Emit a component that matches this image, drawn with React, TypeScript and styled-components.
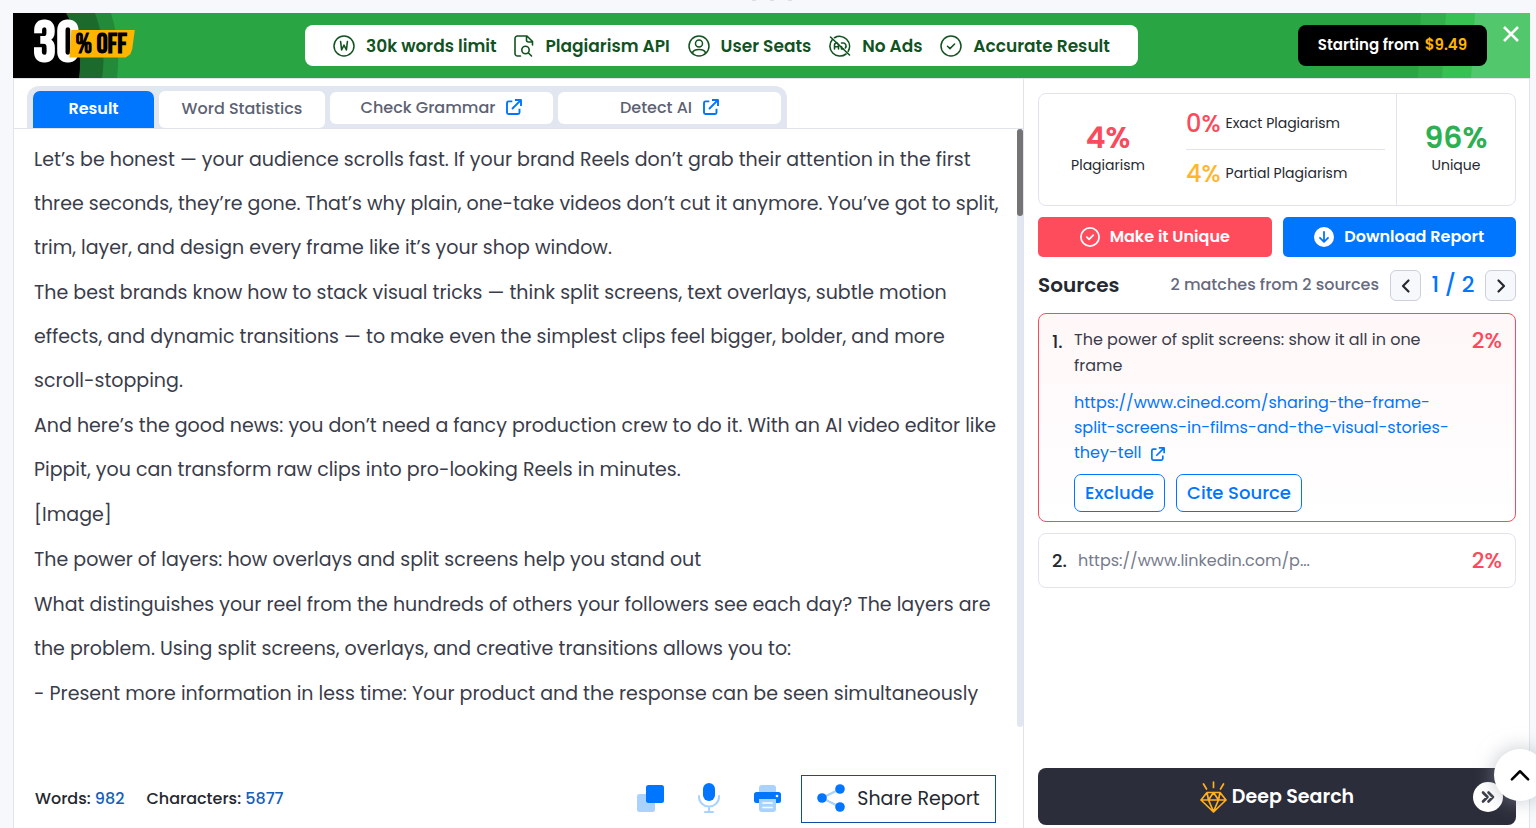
import React from 'react';
import styled, { createGlobalStyle, css } from 'styled-components';

const Global = createGlobalStyle`
  *, *::before, *::after { box-sizing: border-box; }
  body {
    margin: 0;
    background: #f6f8fb;
    color: #25282f;
    font-family: Poppins, Inter, "Liberation Sans", sans-serif;
    overflow: hidden;
  }
  button { font: inherit; cursor: pointer; border: 0; padding: 0; }
  a { text-decoration: none; }
  p, h2 { margin: 0; }
  svg { display: block; flex: none; }
`;

const Page = styled.div`
  height: 100vh;
  min-height: 640px;
  padding: 0 6px 0 13px;
  display: flex;
  flex-direction: column;
`;

/* lower edge of the dots that close the section above */
const SectionDots = styled.div`
  flex: none;
  height: 13px;
  display: flex;
  justify-content: center;
  gap: 14px;
  i { width: 4px; height: 1px; background: #dcdee2; }
`;

/* ---------- promo banner ---------- */
const Banner = styled.header`
  position: relative;
  flex: none;
  height: 65px;
  padding-right: 43px;
  display: flex;
  align-items: center;
  justify-content: space-between;
  background: #2aa544;
  overflow: hidden;
`;

const BannerArt = styled.svg<{ $side: 'left' | 'right' }>`
  position: absolute;
  top: 0;
  ${({ $side }) => ($side === 'left' ? 'left: 0;' : 'right: 0;')}
`;

const Offer = styled.div`
  position: relative;
  flex: none;
  width: 132px;
  padding: 0 0 4px 20px;
  display: flex;
  align-items: center;
  font-family: "Bebas Neue", Oswald, "Liberation Sans Narrow", "Roboto Condensed", sans-serif;
  font-weight: 700;
`;

const OfferNumber = styled.span`
  color: #fff;
  font-size: 58px;
  line-height: 60px;
  margin-right: -10px;
  white-space: nowrap;
`;

const OfferTag = styled.span`
  position: relative;
  height: 28px;
  padding: 1px 8px 0 6px;
  background: #ffb400;
  color: #000;
  font-size: 28px;
  line-height: 28px;
  white-space: nowrap;
  clip-path: polygon(3% 0, 100% 0, 96% 70%, 93% 88%, 86% 100%, 0 100%);
`;

const Perks = styled.ul`
  position: relative;
  flex: 0 1 833px;
  height: 41px;
  margin: 0;
  padding: 0 28px;
  display: flex;
  align-items: center;
  justify-content: space-between;
  list-style: none;
  background: #fff;
  border-radius: 8px;
  color: #11521f;
`;

const Perk = styled.li`
  display: flex;
  align-items: center;
  gap: 11px;
  font-size: 17px;
  font-weight: 600;
  white-space: nowrap;
`;

const PriceButton = styled.button`
  position: relative;
  flex: none;
  width: 189px;
  height: 41px;
  padding-bottom: 2px;
  border-radius: 8px;
  background: #000;
  color: #fff;
  font-size: 15px;
  font-weight: 600;
  span { color: #ffb400; margin-left: 2px; }
`;

const CloseButton = styled.button`
  position: absolute;
  top: 12px;
  right: 10px;
  background: none;
  color: #fff;
`;

/* ---------- workspace ---------- */
const Workspace = styled.main`
  flex: 1;
  min-height: 0;
  display: grid;
  grid-template-columns: 2fr 1fr;
  background: #fff;
  border: 1px solid #e1e4ec;
  border-bottom: 0;
`;

const ReportPane = styled.section`
  min-width: 0;
  min-height: 0;
  display: flex;
  flex-direction: column;
  border-right: 1px solid #e1e4ec;
`;

const TabStrip = styled.div`
  flex: none;
  padding: 7px 0 0 13px;
  border-bottom: 1px solid #e1e4ec;
  display: flex;
`;

const Tabs = styled.nav`
  height: 42px;
  padding: 5px 6px 0;
  display: flex;
  gap: 5px;
  background: #e2e6f0;
  border-radius: 12px 12px 0 0;
`;

const tabBase = css`
  display: flex;
  align-items: center;
  justify-content: center;
  padding-bottom: 2px;
  font-size: 16px;
  white-space: nowrap;
`;

const Tab = styled.button<{ $active?: boolean }>`
  ${tabBase}
  height: 37px;
  width: ${({ $active }) => ($active ? '121px' : '166px')};
  background: ${({ $active }) => ($active ? '#0076ff' : '#fff')};
  color: ${({ $active }) => ($active ? '#fff' : '#5d6272')};
  font-weight: ${({ $active }) => ($active ? 600 : 500)};
  border-radius: ${({ $active }) => ($active ? '7px 7px 0 0' : '6px')};
`;

const TabLink = styled.a`
  ${tabBase}
  width: 223px;
  height: 32px;
  margin-top: 1px;
  gap: 11px;
  background: #fff;
  color: #5d6272;
  font-weight: 500;
  border-radius: 6px;
  svg { color: #0076ff; }
`;

const Reader = styled.div`
  flex: 1;
  min-height: 0;
  display: flex;
`;

const Article = styled.article`
  flex: 1;
  min-width: 0;
  overflow: hidden;
  padding: 9px 16px 0 20px;
  color: #3a3c4a;
  font-size: 19px;
  line-height: 44px;
`;

const Paragraph = styled.p`
  margin-bottom: 1px;
  white-space: nowrap;
`;

const ScrollTrack = styled.div`
  width: 6px;
  background: #e2e6f0;
  border-radius: 3px;
`;

const ScrollThumb = styled.div`
  height: 87px;
  background: #747474;
  border-radius: 3px;
`;

const ReportFooter = styled.footer`
  flex: none;
  height: 101px;
  padding: 48px 27px 5px 21px;
  display: flex;
  align-items: center;
  justify-content: space-between;
`;

const Counts = styled.div`
  display: flex;
  align-items: center;
  gap: 22px;
  padding-bottom: 2px;
  font-size: 16px;
  font-weight: 500;
  b { font-weight: 500; color: #1660b8; }
`;

const Actions = styled.div`
  display: flex;
  align-items: center;
  gap: 20px;
`;

const IconGroup = styled.div`
  display: flex;
  align-items: center;
  padding-bottom: 2px;
  gap: 34px;
`;

const IconButton = styled.button`
  background: none;
`;

const ShareButton = styled.button`
  width: 195px;
  height: 48px;
  display: flex;
  align-items: center;
  justify-content: center;
  gap: 12px;
  padding-bottom: 2px;
  background: #fff;
  border: 1px solid #0d4ea3;
  color: #25282f;
  font-size: 19px;
`;

/* ---------- side panel ---------- */
const SidePane = styled.aside`
  min-width: 0;
  min-height: 0;
  padding: 14px 13px 3px 14px;
  display: flex;
  flex-direction: column;
`;

const Scores = styled.div`
  flex: none;
  height: 113px;
  display: grid;
  grid-template-columns: 138px 1fr 119px;
  border: 1px solid #e1e4ec;
  border-radius: 8px;
`;

const Score = styled.div<{ $tone: string; $divided?: boolean }>`
  display: flex;
  flex-direction: column;
  align-items: center;
  justify-content: center;
  padding-bottom: 3px;
  border-left: ${({ $divided }) => ($divided ? '1px solid #e1e4ec' : '0')};
  font-size: 14px;
  line-height: 20px;
  strong {
    color: ${({ $tone }) => $tone};
    font-size: 30px;
    font-weight: 600;
    line-height: 34px;
  }
`;

const Breakdown = styled.div`
  padding: 3px 11px 0 9px;
`;

const BreakdownRow = styled.div<{ $tone: string }>`
  height: 52px;
  display: flex;
  align-items: center;
  gap: 5px;
  font-size: 14px;
  white-space: nowrap;
  & + & { border-top: 1px solid #e1e4ec; height: 48px; }
  strong {
    color: ${({ $tone }) => $tone};
    font-size: 24px;
    font-weight: 500;
  }
`;

const MainActions = styled.div`
  display: grid;
  grid-template-columns: 1fr 1fr;
  gap: 11px;
  margin-top: 11px;
`;

const ActionButton = styled.button<{ $fill: string }>`
  height: 40px;
  display: flex;
  align-items: center;
  justify-content: center;
  gap: 10px;
  padding-bottom: 1px;
  background: ${({ $fill }) => $fill};
  border-radius: 5px;
  color: #fff;
  font-size: 16px;
  font-weight: 600;
`;

const SourcesHead = styled.div`
  flex: none;
  height: 31px;
  margin: 13px 0 12px;
  display: flex;
  align-items: center;
  white-space: nowrap;
  h2 { padding-bottom: 2px; font-size: 20px; font-weight: 600; margin-right: auto; color: #25282f; }
`;

const MatchCount = styled.span`
  padding-bottom: 2px;
  color: #676b7e;
  font-size: 16px;
  font-weight: 500;
  margin-right: 11px;
`;

const PagerButton = styled.button`
  width: 31px;
  height: 31px;
  display: grid;
  place-items: center;
  background: #f6f8fb;
  border: 1px solid #cdd0dc;
  border-radius: 6px;
  color: #25282f;
`;

const PageNumber = styled.span`
  width: 64px;
  padding-bottom: 2px;
  text-align: center;
  color: #0076ff;
  font-size: 22px;
  font-weight: 500;
`;

const SourceCard = styled.article<{ $open?: boolean }>`
  flex: none;
  display: grid;
  align-items: ${({ $open }) => ($open ? 'start' : 'center')};
  grid-template-columns: ${({ $open }) => ($open ? '22px' : '26px')} 1fr auto;
  padding: ${({ $open }) => ($open ? '13px 13px 9px' : '12px 13px 11px')};
  border: 1px solid ${({ $open }) => ($open ? '#fb4a5b' : '#e1e4ec')};
  border-radius: 8px;
  background: ${({ $open }) => ($open ? 'linear-gradient(#fff7f8, #fff)' : '#fff')};
  line-height: 26px;
  & + & { margin-top: 11px; }
`;

const SourceIndex = styled.span`
  font-size: 18px;
  font-weight: 500;
  line-height: 30px;
`;

const SourceTitle = styled.p`
  max-width: 370px;
  color: #3a3c4a;
  font-size: 16px;
`;

const SourceUrl = styled.a`
  display: block;
  margin-top: 11px;
  color: #0076ff;
  font-size: 16px;
  line-height: 25px;
  svg { display: inline-block; vertical-align: -3px; margin-left: 10px; }
`;

const MutedUrl = styled.a`
  color: #777b8c;
  font-size: 16px;
`;

const Percent = styled.strong`
  color: #fb4a5b;
  font-size: 22px;
  font-weight: 500;
  line-height: 28px;
`;

const SourceTools = styled.div`
  display: flex;
  gap: 11px;
  margin-top: 9px;
`;

const OutlineButton = styled.button`
  height: 38px;
  padding: 0 10px;
  background: #fff;
  border: 1px solid #0076ff;
  border-radius: 7px;
  color: #0076ff;
  font-size: 18px;
  font-weight: 500;
`;

const DeepSearch = styled.button`
  flex: none;
  height: 57px;
  margin-top: auto;
  padding: 0 13px 0 43px;
  display: flex;
  align-items: center;
  background: #2c2d3a;
  border-radius: 8px;
  color: #fff;
  font-size: 19px;
  font-weight: 600;
`;

const DeepLabel = styled.span`
  flex: 1;
  display: flex;
  align-items: center;
  justify-content: center;
  gap: 5px;
`;

const RoundBadge = styled.span`
  width: 30px;
  height: 30px;
  display: grid;
  place-items: center;
  border-radius: 50%;
  background: #fff;
  color: #3a3c4a;
`;

const ToTop = styled.button`
  position: fixed;
  right: -10px;
  bottom: 27px;
  width: 52px;
  height: 52px;
  display: grid;
  place-items: center;
  border-radius: 50%;
  background: #fff;
  color: #000;
  box-shadow: 0 0 20px rgba(154, 161, 171, 0.6);
`;

/* ---------- icons ---------- */
const line = (w: number) =>
  ({ fill: 'none', stroke: 'currentColor', strokeWidth: w, strokeLinecap: 'round', strokeLinejoin: 'round' }) as const;

const WordIcon = () => (
  <svg width="22" height="22" viewBox="0 0 22 22" {...line(1.5)}>
    <circle cx="11" cy="11" r="10" />
    <path d="M7.6 6.5 8.6 15 11 10.2 13.4 15 14.4 6.5" strokeWidth="1.6" />
  </svg>
);

const FileSearchIcon = () => (
  <svg width="20" height="22" viewBox="0 0 20 22" {...line(1.6)}>
    <path d="M6.5 21H3.5A2.5 2.5 0 0 1 1 18.5V3.5A2.5 2.5 0 0 1 3.5 1H13l5.5 5.5V10M12.500 1.500V5a2 2 0 0 0 2 2h4" />
    <circle cx="11.500" cy="15" r="3.700" />
    <path d="m14.500 18 3 3" />
  </svg>
);

const UserIcon = () => (
  <svg width="22" height="22" viewBox="0 0 22 22" {...line(1.5)}>
    <circle cx="11" cy="11" r="10" />
    <circle cx="11" cy="8.500" r="3.500" />
    <path d="M4.500 18c.5-2.600 2.600-3.600 6.500-3.600s6 1 6.500 3.600" />
  </svg>
);

const NoAdsIcon = () => (
  <svg width="22" height="22" viewBox="0 0 22 22" {...line(1.6)}>
    <path d="M5.500 2.700A10 10 0 0 1 19.200 16.300M17 19A10 10 0 0 1 3.200 4.700M1.500 2l19 18" />
    <path d="M5.500 14V10a2 2 0 0 1 3-1.700M9.500 14v-4.500M5.500 11.800h4M12.500 8h1.500a3 3 0 0 1 2.300 5M12.500 11.500V14h2" />
  </svg>
);

const CheckCircleIcon = ({ size = 22, w = 1.5 }: { size?: number; w?: number }) => (
  <svg width={size} height={size} viewBox="0 0 22 22" {...line(w)}>
    <circle cx="11" cy="11" r="10" />
    <path d="m7.500 11.200 2.500 2.400 4.600-4.600" />
  </svg>
);

const DownloadIcon = () => (
  <svg width="20" height="20" viewBox="0 0 20 20" fill="none">
    <circle cx="10" cy="10" r="10" fill="#fff" />
    <path d="M10 4.800v9.600M6 10.800l4 4 4-4" stroke="#0076ff" strokeWidth="1.800" strokeLinecap="round" strokeLinejoin="round" />
  </svg>
);

const ExternalIcon = ({ size = 16 }: { size?: number }) => (
  <svg width={size} height={size} viewBox="0 0 16 16" fill="none" stroke="currentColor" strokeWidth="1.900" strokeLinejoin="round">
    <path d="M6.300 2.400H2.500A1.500 1.500 0 0 0 1 3.900V13.500A1.500 1.500 0 0 0 2.500 15H12A1.500 1.500 0 0 0 13.500 13.500V9.700M9 1h6v6M14.800 1.200 6 10" />
  </svg>
);

const CloseIcon = () => (
  <svg width="18" height="18" viewBox="0 0 18 18" fill="none" stroke="currentColor" strokeWidth="2.600">
    <path d="m2 2 14 14M16 2 2 16" />
  </svg>
);

const ChevronIcon = ({ d, size = 16, w = 2.2 }: { d: string; size?: number; w?: number }) => (
  <svg width={size} height={size} viewBox="0 0 16 16" {...line(w)}>
    <path d={d} />
  </svg>
);

const CopyIcon = () => (
  <svg width="27" height="27" viewBox="0 0 27 27">
    <rect y="9" width="18" height="18" rx="2.500" fill="#a9d2ff" />
    <rect x="9" width="18" height="18" rx="2.500" fill="#0076ff" />
  </svg>
);

const MicIcon = () => (
  <svg width="22" height="30" viewBox="0 0 22 30" fill="none">
    <path d="M1 13v1a10 9.500 0 0 0 20 0v-1M11 23.500V29M7 29h8" stroke="#a9d2ff" strokeWidth="2" strokeLinecap="round" />
    <rect x="5" width="12" height="18" rx="6" fill="#0076ff" />
  </svg>
);

const PrinterIcon = () => (
  <svg width="27" height="27" viewBox="0 0 27 27">
    <path d="M5 8V3a3 3 0 0 1 3-3h11a3 3 0 0 1 3 3v5z" fill="#a9d2ff" />
    <rect y="7" width="27" height="11" rx="2.500" fill="#0076ff" />
    <circle cx="23" cy="11" r="1.300" fill="#fff" />
    <path d="M5 14h17v10a3 3 0 0 1-3 3H8a3 3 0 0 1-3-3z" fill="#a9d2ff" />
    <path d="M9 18h9M9 22.500h9" stroke="#fff" strokeWidth="1.700" strokeLinecap="round" />
  </svg>
);

const ShareIcon = () => (
  <svg width="28" height="28" viewBox="0 0 28 28">
    <path d="M23 5 5 14l18 9" fill="none" stroke="#a9d2ff" strokeWidth="2.200" />
    <g fill="#0076ff">
      <circle cx="23" cy="5" r="4.800" />
      <circle cx="5" cy="14" r="4.800" />
      <circle cx="23" cy="23" r="4.800" />
    </g>
  </svg>
);

const DiamondIcon = () => (
  <svg width="27" height="32" viewBox="0 0 27 32" fill="none" stroke="#ffb020" strokeWidth="1.700" strokeLinejoin="round" strokeLinecap="round">
    <path d="M7 11.500h13l6 7.500-12.500 12L1 19zM1 19h25M7 11.500 8.500 19l5 11.500 5-11.500L20 11.500M8.500 19l5-7.500 5 7.500M13.500 1v5.500M3.500 3 6.500 8M23.500 3l-3 5" />
  </svg>
);

/* ---------- content ---------- */
const paragraphs: string[][] = [
  [
    'Let’s be honest — your audience scrolls fast. If your brand Reels don’t grab their attention in the first',
    'three seconds, they’re gone. That’s why plain, one-take videos don’t cut it anymore. You’ve got to split,',
    'trim, layer, and design every frame like it’s your shop window.',
  ],
  [
    'The best brands know how to stack visual tricks — think split screens, text overlays, subtle motion',
    'effects, and dynamic transitions — to make even the simplest clips feel bigger, bolder, and more',
    'scroll-stopping.',
  ],
  [
    'And here’s the good news: you don’t need a fancy production crew to do it. With an AI video editor like',
    'Pippit, you can transform raw clips into pro-looking Reels in minutes.',
  ],
  ['[Image]'],
  ['The power of layers: how overlays and split screens help you stand out'],
  [
    'What distinguishes your reel from the hundreds of others your followers see each day? The layers are',
    'the problem. Using split screens, overlays, and creative transitions allows you to:',
  ],
  ['- Present more information in less time: Your product and the response can be seen simultaneously'],
];

const perks = [
  { icon: <WordIcon />, label: '30k words limit' },
  { icon: <FileSearchIcon />, label: 'Plagiarism API' },
  { icon: <UserIcon />, label: 'User Seats' },
  { icon: <NoAdsIcon />, label: 'No Ads' },
  { icon: <CheckCircleIcon />, label: 'Accurate Result' },
];

export default function App() {
  return (
    <>
      <Global />
      <Page>
        <SectionDots aria-hidden="true"><i /><i /><i /></SectionDots>
        <Banner>
          <BannerArt $side="left" width="106" height="65" viewBox="0 0 106 65">
            <path d="M0 0H98Q108 32 104 65H0z" fill="#238a3a" />
            <path d="M0 0H82Q94 32 89 65H0z" fill="#1c6b2d" />
            <path d="M0 0H53Q71 30 66 65H0z" fill="#000" />
          </BannerArt>
          <BannerArt $side="right" width="113" height="65" viewBox="0 0 113 65">
            <path d="M4 0H113V65H1z" fill="#33b04c" />
            <path d="M29 0H113V65H25z" fill="#37c153" />
            <path d="M58 0H113V65H54z" fill="#52c76b" />
          </BannerArt>
          <Offer>
            <OfferNumber>30</OfferNumber>
            <OfferTag>% OFF</OfferTag>
          </Offer>
          <Perks>
            {perks.map((p) => (
              <Perk key={p.label}>
                {p.icon}
                {p.label}
              </Perk>
            ))}
          </Perks>
          <PriceButton>
            Starting from <span>$9.49</span>
          </PriceButton>
          <CloseButton aria-label="Close">
            <CloseIcon />
          </CloseButton>
        </Banner>

        <Workspace>
          <ReportPane>
            <TabStrip>
              <Tabs>
                <Tab $active>Result</Tab>
                <Tab>Word Statistics</Tab>
                <TabLink href="#grammar">
                  Check Grammar <ExternalIcon />
                </TabLink>
                <TabLink href="#detect">
                  Detect AI <ExternalIcon />
                </TabLink>
              </Tabs>
            </TabStrip>
            <Reader>
              <Article>
                {paragraphs.map((lines) => (
                  <Paragraph key={lines[0]}>
                    {lines.map((text, i) => (
                      <React.Fragment key={text}>
                        {i > 0 && <br />}
                        {text}
                      </React.Fragment>
                    ))}
                  </Paragraph>
                ))}
              </Article>
              <ScrollTrack>
                <ScrollThumb />
              </ScrollTrack>
            </Reader>
            <ReportFooter>
              <Counts>
                <span>Words: <b>982</b></span>
                <span>Characters: <b>5877</b></span>
              </Counts>
              <Actions>
                <IconGroup>
                  <IconButton aria-label="Copy"><CopyIcon /></IconButton>
                  <IconButton aria-label="Listen"><MicIcon /></IconButton>
                  <IconButton aria-label="Print"><PrinterIcon /></IconButton>
                </IconGroup>
                <ShareButton><ShareIcon />Share Report</ShareButton>
              </Actions>
            </ReportFooter>
          </ReportPane>

          <SidePane>
            <Scores>
              <Score $tone="#fb4a5b"><strong>4%</strong>Plagiarism</Score>
              <Breakdown>
                <BreakdownRow $tone="#fb4a5b"><strong>0%</strong>Exact Plagiarism</BreakdownRow>
                <BreakdownRow $tone="#ffb62e"><strong>4%</strong>Partial Plagiarism</BreakdownRow>
              </Breakdown>
              <Score $tone="#2db052" $divided><strong>96%</strong>Unique</Score>
            </Scores>
            <MainActions>
              <ActionButton $fill="#ff4c5d"><CheckCircleIcon size={20} w={1.9} />Make it Unique</ActionButton>
              <ActionButton $fill="#0076ff"><DownloadIcon />Download Report</ActionButton>
            </MainActions>
            <SourcesHead>
              <h2>Sources</h2>
              <MatchCount>2 matches from 2 sources</MatchCount>
              <PagerButton aria-label="Previous source"><ChevronIcon d="M10.500 2.500 5 8l5.500 5.500" /></PagerButton>
              <PageNumber>1 / 2</PageNumber>
              <PagerButton aria-label="Next source"><ChevronIcon d="M5.500 2.500 11 8l-5.500 5.500" /></PagerButton>
            </SourcesHead>
            <SourceCard $open>
              <SourceIndex>1.</SourceIndex>
              <div>
                <SourceTitle>The power of split screens: show it all in one frame</SourceTitle>
                <SourceUrl href="#source">
                  https://www.cined.com/sharing-the-frame-<br />
                  split-screens-in-films-and-the-visual-stories-<br />
                  they-tell<ExternalIcon size={14} />
                </SourceUrl>
                <SourceTools>
                  <OutlineButton>Exclude</OutlineButton>
                  <OutlineButton>Cite Source</OutlineButton>
                </SourceTools>
              </div>
              <Percent>2%</Percent>
            </SourceCard>
            <SourceCard>
              <SourceIndex>2.</SourceIndex>
              <MutedUrl href="#source-2">https://www.linkedin.com/p...</MutedUrl>
              <Percent>2%</Percent>
            </SourceCard>
            <DeepSearch>
              <DeepLabel><DiamondIcon />Deep Search</DeepLabel>
              <RoundBadge><ChevronIcon d="M3 3.500 7.500 8 3 12.500M8.500 3.500 13 8l-4.500 4.500" w={2.6} /></RoundBadge>
            </DeepSearch>
          </SidePane>
        </Workspace>
      </Page>
      <ToTop aria-label="Back to top">
        <ChevronIcon d="M1.500 11.500 8 5l6.500 6.500" size={20} w={2} />
      </ToTop>
    </>
  );
}
